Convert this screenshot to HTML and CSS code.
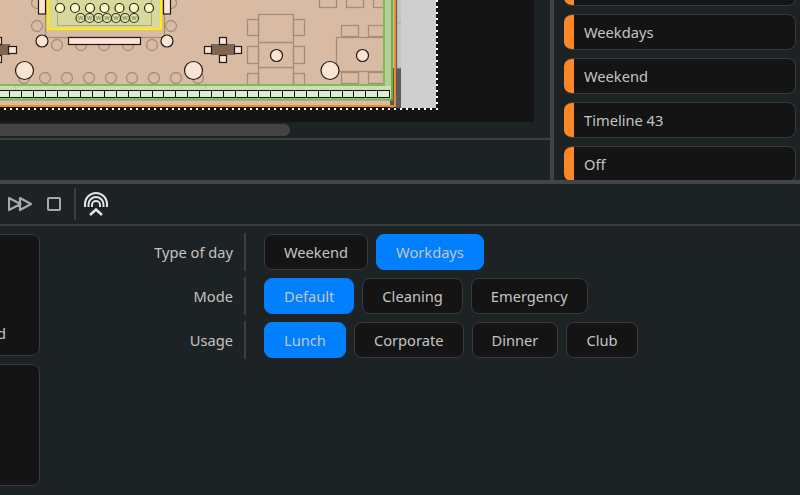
FILE: index.html
```html
<!DOCTYPE html>
<html lang="en">
<head>
<meta charset="utf-8">
<title>Scenes</title>
<link rel="stylesheet" href="styles.css">
</head>
<body>
<div class="app">
  <section class="top">
    <div class="stage">
      <div class="viewport">
        <svg class="plan" width="438" height="110" viewBox="0 0 438 110">
          <rect class="void" width="401" height="110"/>
          <rect class="floor" width="396" height="106"/>
          <rect class="wall" x="396" y="68" width="5" height="40"/>
          <rect class="wall" x="390" y="68" width="4" height="40"/>
          <rect class="outside" x="401" width="35" height="108"/>
          <rect class="outside-strip" x="397" width="4" height="68"/>
          <path class="outside-line" d="M397 23H401M397 68H401M397 0V68"/>

          <g class="lines">
            <rect x="45.500" y="-10" width="119" height="47.500"/>
            <circle cx="37" cy="26" r="5.500"/><circle cx="171" cy="26" r="5.500"/>
            <circle cx="37" cy="3" r="5.500"/><circle cx="171" cy="3" r="5.500"/>
            <circle cx="57" cy="45" r="5.500"/><circle cx="81" cy="45" r="5.500"/><circle cx="104" cy="45" r="5.500"/><circle cx="128" cy="45" r="5.500"/><circle cx="152" cy="45" r="5.500"/>
            <circle cx="24" cy="78" r="5.500"/><circle cx="45" cy="78" r="5.500"/><circle cx="67" cy="78" r="5.500"/><circle cx="89" cy="78" r="5.500"/><circle cx="111" cy="78" r="5.500"/><circle cx="132" cy="78" r="5.500"/><circle cx="154" cy="78" r="5.500"/><circle cx="176" cy="78" r="5.500"/><circle cx="198" cy="78" r="5.500"/>
            <rect x="258.500" y="14.500" width="35" height="75"/>
            <path d="M258.500 42.500H293.500M258.500 67.500H293.500"/>
            <rect x="247.500" y="19.500" width="11" height="16"/><rect x="247.500" y="46.500" width="11" height="17"/><rect x="247.500" y="73.500" width="11" height="17"/>
            <rect x="293.500" y="19.500" width="11" height="16"/><rect x="293.500" y="46.500" width="11" height="17"/><rect x="293.500" y="73.500" width="11" height="17"/>
            <rect x="336.500" y="37.500" width="53" height="34"/>
            <rect x="341.500" y="25.500" width="17" height="11"/><rect x="368.500" y="25.500" width="17" height="11"/>
            <rect x="341.500" y="72.500" width="17" height="11"/><rect x="368.500" y="72.500" width="17" height="11"/>
            <rect x="319.500" y="-3" width="17" height="10.500"/><rect x="346.500" y="-3" width="17" height="10.500"/><rect x="373.500" y="-3" width="17" height="10.500"/>
          </g>

          <rect class="band" x="383" width="10" height="86"/>
          <rect class="band-low" y="86" width="393" height="13"/>
          <path class="band-tick" d="M15.500 86V90M205.500 86V90"/>
          <path class="green" d="M384 0V85H0"/>
          <path class="green-dark" d="M392 0V99.500H0"/>
          <path class="orange" d="M395 0V106H0"/>

          <rect class="seats" x="-4" y="90.500" width="393.500" height="7"/>
          <path class="seat-lines" d="M9.500 90V97M21.500 90V97M33.500 90V97M45.500 90V97M57.500 90V97M68.500 90V97M80.500 90V97M92.500 90V97M104.500 90V97M116.500 90V97M128.500 90V97M140.500 90V97M152.500 90V97M163.500 90V97M175.500 90V97M187.500 90V97M199.500 90V97M211.500 90V97M223.500 90V97M235.500 90V97M247.500 90V97M258.500 90V97M270.500 90V97M282.500 90V97M294.500 90V97M306.500 90V97M318.500 90V97M330.500 90V97M342.500 90V97M353.500 90V97M365.500 90V97M377.500 90V97"/>

          <rect class="stagefill" x="48" y="-4" width="113" height="33"/>
          <rect class="stageinner" x="57.500" y="-4" width="94" height="29.500"/>
          <g class="seat-top">
            <circle cx="60" cy="8" r="4.500"/><circle cx="75" cy="8" r="4.500"/><circle cx="90" cy="8" r="4.500"/><circle cx="104.500" cy="8" r="4.500"/><circle cx="119.500" cy="8" r="4.500"/><circle cx="134" cy="8" r="4.500"/><circle cx="149" cy="8" r="4.500"/>
          </g>
          <g class="seat-low">
            <circle cx="80.500" cy="18" r="4.500"/><circle cx="89.500" cy="18" r="4.500"/><circle cx="98.500" cy="18" r="4.500"/><circle cx="107" cy="18" r="4.500"/><circle cx="116" cy="18" r="4.500"/><circle cx="125" cy="18" r="4.500"/><circle cx="134" cy="18" r="4.500"/>
            <text x="80.500" y="20">w</text><text x="89.500" y="20">w</text><text x="98.500" y="20">w</text><text x="107" y="20">w</text><text x="116" y="20">w</text><text x="125" y="20">w</text><text x="134" y="20">w</text>
          </g>

          <g class="brown">
            <rect x="-6" y="44" width="16" height="11"/>
            <rect x="211" y="44" width="24" height="11"/>
          </g>
          <g class="peach">
            <rect x="38.500" y="-4" width="7" height="18"/><rect x="163.500" y="-4" width="7" height="18"/>
            <rect x="68.500" y="37.500" width="72" height="7"/>
            <rect x="-4" y="37.500" width="5.500" height="7"/><rect x="-4" y="55.500" width="5.500" height="7"/><rect x="8.500" y="46.500" width="8" height="7"/>
            <rect x="219.500" y="37.500" width="7" height="7"/><rect x="219.500" y="55.500" width="7" height="7"/><rect x="204.500" y="46.500" width="7" height="7"/><rect x="234.500" y="46.500" width="7" height="7"/>
            <circle cx="42" cy="41" r="6"/><circle cx="167" cy="41" r="6"/>
            <circle cx="276.500" cy="55.500" r="6"/><circle cx="362.500" cy="55.500" r="6"/>
            <circle cx="24.500" cy="70.500" r="9"/><circle cx="193.500" cy="70.500" r="9"/><circle cx="330" cy="70.500" r="9"/>
          </g>
          <path class="dotted" d="M437 0V109H0"/>
        </svg>
      </div>
      <div class="scrollbar"><div class="thumb"></div></div>
      <div class="stage-foot"></div>
    </div>
    <aside class="side">
      <ul class="timelines">
        <li class="timeline"><span class="stripe"></span></li>
        <li class="timeline"><span class="stripe"></span><span class="timeline-name">Weekdays</span></li>
        <li class="timeline"><span class="stripe"></span><span class="timeline-name">Weekend</span></li>
        <li class="timeline"><span class="stripe"></span><span class="timeline-name">Timeline 43</span></li>
        <li class="timeline"><span class="stripe"></span><span class="timeline-name">Off</span></li>
      </ul>
    </aside>
  </section>

  <nav class="toolbar">
    <button class="tool tool-ff" aria-label="Fast forward">
      <svg width="24" height="16" viewBox="0 0 24 16"><path d="M1 2L12.500 8L1 14ZM12 2L23 8L12 14Z"/></svg>
    </button>
    <button class="tool tool-stop" aria-label="Stop">
      <svg width="14" height="14" viewBox="0 0 14 14"><rect x="1" y="1" width="12" height="12" rx="1"/></svg>
    </button>
    <span class="tool-sep"></span>
    <button class="tool tool-air" aria-label="Broadcast">
      <svg width="24" height="24" viewBox="0 0 24 24"><path d="M1 15V12A11 11 0 0 1 23 12V15M4.500 15V12.500A7.500 7.500 0 0 1 19.500 12.500V15M8 15V13A4 4 0 0 1 16 13V15"/><path class="chev" d="M6 23L12 17.500L18 23"/></svg>
    </button>
  </nav>

  <section class="bottom">
    <div class="cards">
      <div class="card"><span class="card-name">d</span></div>
      <div class="card"></div>
    </div>
    <form class="filters">
      <div class="filter">
        <span class="filter-label">Type of day</span><span class="filter-sep"></span>
        <div class="choices"><span class="choice">Weekend</span><span class="choice is-on">Workdays</span></div>
      </div>
      <div class="filter">
        <span class="filter-label">Mode</span><span class="filter-sep"></span>
        <div class="choices"><span class="choice is-on">Default</span><span class="choice">Cleaning</span><span class="choice">Emergency</span></div>
      </div>
      <div class="filter">
        <span class="filter-label">Usage</span><span class="filter-sep"></span>
        <div class="choices"><span class="choice is-on">Lunch</span><span class="choice">Corporate</span><span class="choice">Dinner</span><span class="choice">Club</span></div>
      </div>
    </form>
  </section>
</div>
</body>
</html>
```
FILE: styles.css
```css
* { box-sizing: border-box; }
html, body { margin: 0; height: 100%; }
body {
  background: #1d2225;
  color: #c4c4c4;
  font: 14.67px/20px "Noto Sans", sans-serif;
  overflow: hidden;
}
.app { width: 800px; height: 495px; display: flex; flex-direction: column; overflow: hidden; }

/* top */
.top { height: 184px; display: flex; border-bottom: 4px solid #444; flex: none; }
.stage { width: 554px; flex: none; display: flex; flex-direction: column; border-right: 4px solid #444; }
.viewport { height: 122px; width: 534px; background: #141414; overflow: hidden; flex: none; }
.plan { display: block; }
.void { fill: #141414; }
.floor { fill: #d9bba3; }
.wall { fill: #5a5a5a; }
.outside { fill: #cfcfcf; }
.outside-strip { fill: #c4c4c4; }
.outside-line { stroke: #a9a9a9; stroke-width: 1; fill: none; }
.lines { fill: none; stroke: #a68d78; stroke-width: 1.3; }
.band { fill: #b4cf96; }
.band-low { fill: #cfdcb8; }
.band-tick { stroke: #b5cc9c; fill: none; }
.green { fill: none; stroke: #7dbd58; stroke-width: 2; }
.green-dark { fill: none; stroke: #6db340; stroke-width: 2; }
.orange { fill: none; stroke: #f08a2c; stroke-width: 2; }
.seats { fill: #deecd3; stroke: #111; stroke-width: 1; }
.seat-lines { stroke: #111; stroke-width: 1; fill: none; }
.stagefill { fill: #d9d89c; stroke: #ffee00; stroke-width: 2; }
.stageinner { fill: none; stroke: #a9a97c; stroke-width: 1; }
.seat-top circle { fill: #fdfdc4; stroke: #22221a; stroke-width: 1.2; }
.seat-low circle { fill: #e3e3a8; stroke: #33332a; stroke-width: 1.2; }
.seat-low text { fill: #7a7a50; font: 7px "Noto Sans", sans-serif; text-anchor: middle; }
.brown { fill: #7f6550; }
.peach { fill: #fde3d3; stroke: #1c1c1c; stroke-width: 1.2; }
.dotted { fill: none; stroke: #fff; stroke-width: 2; stroke-dasharray: 2 4; }

.scrollbar { height: 16px; padding: 2px 0; flex: none; width: 550px; }
.thumb { width: 290px; height: 12px; background: #444; border-radius: 0 6px 6px 0; }
.stage-foot { flex: 1; border-top: 2px solid #3e3e3e; }

.side { flex: 1; overflow: hidden; padding: 0 4px 0 10px; }
.timelines { list-style: none; margin: -30px 0 0; padding: 0; display: flex; flex-direction: column; gap: 8px; }
.timeline {
  height: 36px; flex: none; display: flex; align-items: center;
  background: #141414; border: 1px solid #3a3a3a; border-left: 0; border-radius: 8px; overflow: hidden;
}
.stripe { width: 10px; align-self: stretch; margin: -1px 0; background: #fb8726; flex: none; }
.timeline-name { padding-left: 10px; }

/* toolbar */
.toolbar { height: 42px; flex: none; display: flex; align-items: center; border-bottom: 2px solid #3e3e3e; }
.tool { padding: 0; margin: 0; border: 0; background: none; display: block; line-height: 0; }
.tool svg { display: block; fill: none; }
.tool-ff { margin-left: 8px; }
.tool-ff path { stroke: #a8a8a8; stroke-width: 2.200; stroke-linejoin: round; }
.tool-stop { margin-left: 15px; }
.tool-stop rect { stroke: #a8a8a8; stroke-width: 2; }
.tool-sep { width: 2px; height: 32px; background: #3e3e3e; margin-left: 13px; }
.tool-air { margin-left: 8px; }
.tool-air path { stroke: #e4e4e4; stroke-width: 2; fill: none; }
.tool-air .chev { stroke-width: 2.500; }

/* bottom */
.bottom { flex: 1; display: flex; padding-top: 7px; }
.cards { width: 200px; margin: 1px 0 0 -160px; display: flex; flex-direction: column; gap: 8px; flex: none; }
.card {
  height: 122px; flex: none; background: #141414; border: 1px solid #3a3a3a; border-radius: 8px;
  display: flex; align-items: flex-end; padding: 0 0 12px 156px;
}
.filters { display: flex; flex-direction: column; gap: 6px; }
.filter { display: flex; align-items: center; height: 38px; }
.filter-label { width: 193px; text-align: right; }
.filter-sep { width: 2px; height: 38px; background: #3e3e3e; margin: 0 18px 0 11px; }
.choices { display: flex; gap: 8px; }
.choice { height: 36px; padding: 0 19px; display: flex; align-items: center; background: #141414; border: 1px solid #3a3a3a; border-radius: 8px; }
.choice.is-on { background: #0080ff; border-color: #0080ff; }
```
